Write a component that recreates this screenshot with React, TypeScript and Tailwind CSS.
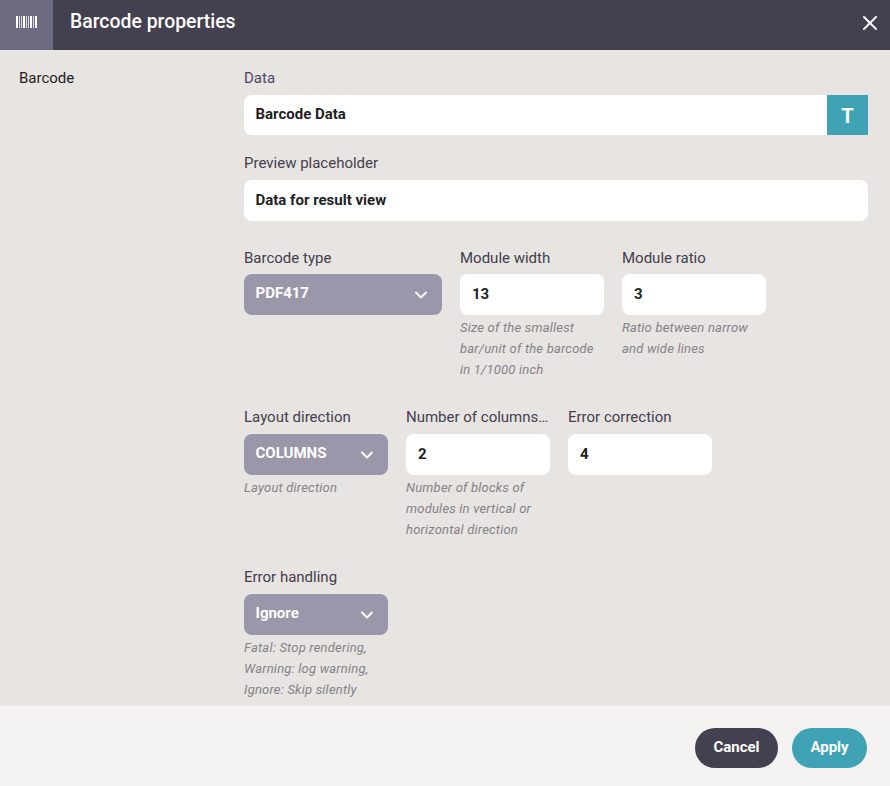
import { ChevronDown, X } from "lucide-react";

function Label({ children, color = "text-[#43404f]" }: { children: React.ReactNode; color?: string }) {
  return <div className={`h-[20px] truncate text-[15px] leading-[20px] ${color}`}>{children}</div>;
}

function Help({ lines }: { lines: string[] }) {
  return (
    <div className="mt-[2px] text-[13px] leading-[21px] tracking-[0.2px] text-[#84828a] italic">
      {lines.map((l) => (
        <div key={l} className="whitespace-nowrap">{l}</div>
      ))}
    </div>
  );
}

// lower rows sit 1px further from their labels
function TextField({ label, value, help, lower }: { label: string; value: string; help?: string[]; lower?: boolean }) {
  return (
    <div className="w-[144px]">
      <Label>{label}</Label>
      <div className={`${lower ? "mt-[7px]" : "mt-[6px]"} flex h-[41px] items-center rounded-[8px] bg-white px-[12px] text-[15px] font-bold text-[#1f1f24]`}>
        {value}
      </div>
      {help && <Help lines={help} />}
    </div>
  );
}

function SelectField({ label, value, width, help, lower }: { label: string; value: string; width: string; help?: string[]; lower?: boolean }) {
  return (
    <div className={width}>
      <Label>{label}</Label>
      <div className={`${lower ? "mt-[7px]" : "mt-[6px]"} flex h-[41px] items-center justify-between rounded-[8px] bg-[#9a97aa] pr-[11px] pl-[11.5px] text-[15px] font-bold text-white`}>
        <span className="-mt-[3px]">{value}</span>
        <ChevronDown className="h-[20px] w-[20px]" strokeWidth={2.25} />
      </div>
      {help && <Help lines={help} />}
    </div>
  );
}

function BarcodeIcon() {
  return (
    <svg width="21" height="12" viewBox="0 0 21 12" fill="white" className="-mt-[6px]">
      <rect x="0" y="0" width="2" height="12" />
      <rect x="3" y="0" width="1" height="12" opacity="0.75" />
      <rect x="5" y="0" width="1" height="12" opacity="0.75" />
      <rect x="7" y="0" width="2" height="12" />
      <rect x="10" y="0" width="1" height="12" opacity="0.75" />
      <rect x="12" y="0" width="1" height="12" opacity="0.75" />
      <rect x="14" y="0" width="2" height="12" />
      <rect x="17" y="0" width="1" height="12" opacity="0.75" />
      <rect x="19" y="0" width="2" height="12" />
    </svg>
  );
}

export default function App() {
  return (
    <div className="flex h-[786px] w-[890px] flex-col overflow-hidden bg-[#e8e4e1] font-['Roboto',sans-serif]">
      <header className="flex h-[50px] shrink-0 items-center bg-[#43404f] text-white">
        <div className="flex h-full w-[53px] items-center justify-center bg-[#6e6c80]">
          <BarcodeIcon />
        </div>
        <h1 className="-mt-[6px] ml-[17px] flex-1 text-[19.4px] font-medium">Barcode properties</h1>
        <button className="-mt-[5px] mr-[12px] flex h-[16px] w-[16px] items-center justify-center">
          <X className="h-[24px] w-[24px] shrink-0" strokeWidth={2} />
        </button>
      </header>

      <main className="flex flex-1 pt-[18px]">
        <div className="w-[244px] pl-[19px] text-[15px] leading-[20px] text-[#1f1f24]">Barcode</div>
        <div className="w-[624px]">
          <Label color="text-[#4b4a68]">Data</Label>
          <div className="mt-[7px] flex h-[40px]">
            <div className="flex flex-1 items-center rounded-l-[8px] bg-white px-[11.5px] pb-[2px] text-[15px] font-bold text-[#1f1f24]">
              Barcode Data
            </div>
            <div className="flex w-[41px] items-center justify-center bg-[#3fa2b5] pt-[1px] text-[20px] font-bold text-white">T</div>
          </div>

          <div className="mt-[18px]">
            <Label>Preview placeholder</Label>
            <div className="mt-[7px] flex h-[41px] items-center rounded-[8px] bg-white px-[11.5px] text-[15px] font-bold text-[#1f1f24]">
              Data for result view
            </div>
          </div>

          <div className="mt-[27px] flex gap-[18px]">
            <SelectField label="Barcode type" value="PDF417" width="w-[198px]" />
            <TextField
              label="Module width"
              value="13"
              help={["Size of the smallest", "bar/unit of the barcode", "in 1/1000 inch"]}
            />
            <TextField label="Module ratio" value="3" help={["Ratio between narrow", "and wide lines"]} />
          </div>

          <div className="mt-[27px] flex gap-[18px]">
            <SelectField lower label="Layout direction" value="COLUMNS" width="w-[144px]" help={["Layout direction"]} />
            <TextField
              lower
              label="Number of columns…"
              value="2"
              help={["Number of blocks of", "modules in vertical or", "horizontal direction"]}
            />
            <TextField lower label="Error correction" value="4" />
          </div>

          <div className="mt-[27px] flex gap-[18px]">
            <SelectField
              lower
              label="Error handling"
              value="Ignore"
              width="w-[144px]"
              help={["Fatal: Stop rendering,", "Warning: log warning,", "Ignore: Skip silently"]}
            />
          </div>
        </div>
      </main>

      <footer className="flex h-[80px] shrink-0 items-center justify-end gap-[14px] bg-[#f4f3f1] pt-[4px] pr-[23px]">
        <button className="flex h-[40px] w-[83px] items-center justify-center rounded-full bg-[#43404f] pb-[2px] text-[15px] font-bold text-white">
          Cancel
        </button>
        <button className="flex h-[40px] w-[75px] items-center justify-center rounded-full bg-[#3fa2b5] pb-[2px] text-[15px] font-bold text-white">
          Apply
        </button>
      </footer>
    </div>
  );
}
